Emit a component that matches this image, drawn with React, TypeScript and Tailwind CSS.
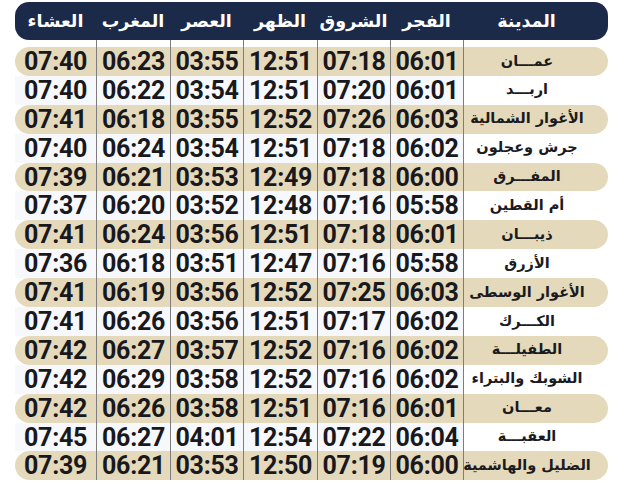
const HEADERS = ["المدينة", "الفجر", "الشروق", "الظهر", "العصر", "المغرب", "العشاء"];

// widths follow the right-to-left column order
const WIDTHS = ["w-[145px]", "w-[73px]", "w-[73px]", "w-[74px]", "w-[73px]", "w-[74px]", "w-[81px]"];

const ROWS: string[][] = [
  ["عمـــان", "06:01", "07:18", "12:51", "03:55", "06:23", "07:40"],
  ["اربـــد", "06:01", "07:20", "12:51", "03:54", "06:22", "07:40"],
  ["الأغوار الشمالية", "06:03", "07:26", "12:52", "03:55", "06:18", "07:41"],
  ["جرش وعجلون", "06:02", "07:18", "12:51", "03:54", "06:24", "07:40"],
  ["المفـــرق", "06:00", "07:18", "12:49", "03:53", "06:21", "07:39"],
  ["أم القطين", "05:58", "07:16", "12:48", "03:52", "06:20", "07:37"],
  ["ذيبـــان", "06:01", "07:18", "12:51", "03:56", "06:24", "07:41"],
  ["الأزرق", "05:58", "07:16", "12:47", "03:51", "06:18", "07:36"],
  ["الأغوار الوسطى", "06:03", "07:25", "12:52", "03:56", "06:19", "07:41"],
  ["الكـــرك", "06:02", "07:17", "12:51", "03:56", "06:26", "07:41"],
  ["الطفيلـــة", "06:02", "07:16", "12:52", "03:57", "06:27", "07:42"],
  ["الشوبك والبتراء", "06:02", "07:16", "12:52", "03:58", "06:29", "07:42"],
  ["معـــان", "06:01", "07:16", "12:51", "03:58", "06:26", "07:42"],
  ["العقبـــة", "06:04", "07:22", "12:54", "04:01", "06:27", "07:45"],
  ["الضليل والهاشمية", "06:00", "07:19", "12:50", "03:53", "06:21", "07:39"],
];

const arabic = "font-['DejaVu_Sans',sans-serif]";
const digits = "font-['Roboto','Liberation_Sans',sans-serif]";

function Cells({ values, striped }: { values?: string[]; striped: boolean }) {
  return (
    <>
      {WIDTHS.map((w, i) => (
        <div
          key={i}
          className={`${w} h-full flex items-center justify-center ${
            i < WIDTHS.length - 1 ? "border-l-[1.5px] border-[#7d7d80]" : ""
          } ${i === 0 ? "pr-[18px]" : ""} ${!striped && i > 0 && values ? "bg-[#f6f8fc]" : ""}`}
        >
          {values &&
            (i === 0 ? (
              <span className={`${arabic} text-[14.5px] font-bold text-[#1b1b1f] whitespace-nowrap`}>
                {values[i]}
              </span>
            ) : (
              <span
                dir="ltr"
                className={`${digits} text-[25px] font-bold leading-none tracking-[-0.3px] text-[#18181d]`}
              >
                {values[i]}
              </span>
            ))}
        </div>
      ))}
    </>
  );
}

export default function App() {
  return (
    <div className="w-[627px] h-[484px] bg-white overflow-hidden">
      <div dir="rtl" className="ml-[15px] w-[593px] pt-[2px]">
        {/* header */}
        <div className="h-[38px] rounded-[14px] bg-[#1b2a49] flex items-center">
          {HEADERS.map((h, i) => (
            <div
              key={h}
              className={`${WIDTHS[i]} flex justify-center ${i === 0 ? "pr-[18px]" : ""} ${arabic} text-[17.5px] font-bold text-white whitespace-nowrap`}
            >
              {h}
            </div>
          ))}
        </div>

        {/* gap under header, lines run through it */}
        <div className="h-[7px] flex">
          <Cells striped={false} />
        </div>

        {ROWS.map((row, r) => {
          const striped = r % 2 === 0;
          return (
            <div
              key={r}
              className={`h-[28.9px] flex ${striped ? "bg-[#e4dabb] rounded-full" : ""}`}
            >
              <Cells values={row} striped={striped} />
            </div>
          );
        })}
      </div>
    </div>
  );
}
